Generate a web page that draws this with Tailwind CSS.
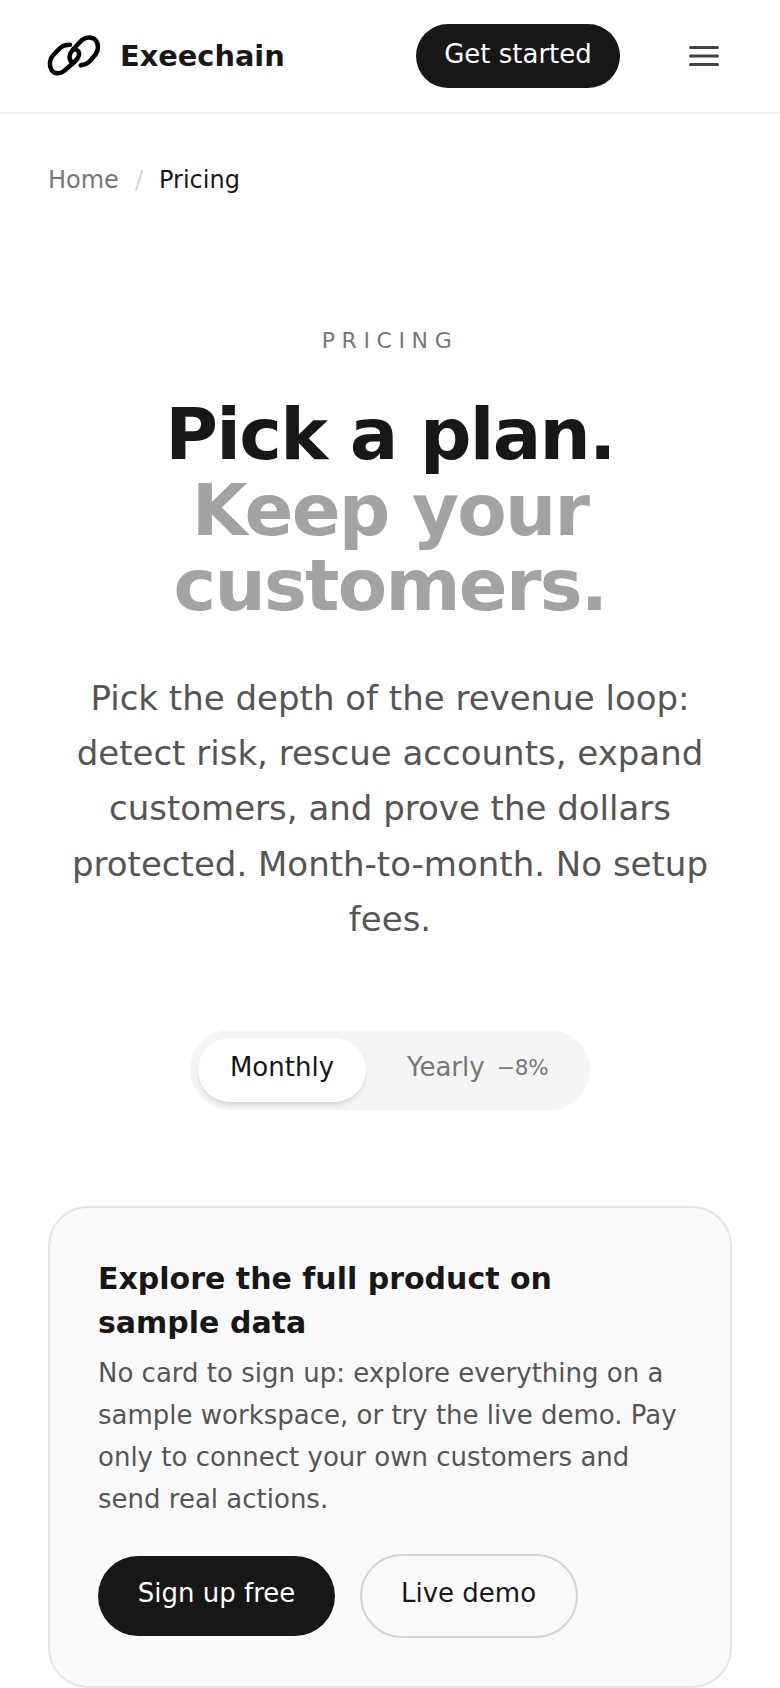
<!DOCTYPE html>
<html lang="en">
<head>
    <meta charset="UTF-8">
    <meta name="viewport" content="width=device-width, initial-scale=1.0">
    <title>Pricing</title>
    <script src="https://cdn.jsdelivr.net/npm/@tailwindcss/browser@4"></script>
</head>
<body class="bg-white text-[#171717] font-['DejaVu_Sans',sans-serif] h-[1688px] overflow-hidden">
    <!-- Navbar -->
    <header class="h-[114px] border-b-2 border-[#efefef] pl-[48px] pr-[61px] flex items-center justify-between">
        <a href="#" class="flex items-center gap-[20px]">
            <svg class="w-[52px] h-[40px] overflow-visible" viewBox="0 0 52 40" fill="none" stroke="#000" stroke-width="4.500" stroke-linecap="round">
                <path d="M22 8.700 C18 8.700 14.500 9.500 11.500 12.500 L4.500 20 C1.500 23.500 1 30 3.500 34 C6.500 38.500 12 38 16 35 L27 25.500 C31 21.500 32.500 17 29.500 14.500 C28.500 13.500 27.500 13.300 26.500 13.500"/>
                <path d="M32.700 29.300 C36 29 39 28 41.500 25.500 L47.500 18.500 C50.500 14.500 51 8 47.500 4 C44 0.500 38 1 34 4 L25 13.500 C21 18 20 23 24.500 27"/>
            </svg>
            <span class="pt-[2px] text-[28.800px] font-bold">Exeechain</span>
        </a>
        <div class="flex items-center gap-[69px]">
            <a href="#" class="w-[204px] h-[64px] rounded-full bg-[#171717] text-white text-[26px] flex items-center justify-center pb-[4px]">Get started</a>
            <svg class="w-[30px] h-[20px]" viewBox="0 0 30 20" fill="none" stroke="#444" stroke-width="3" stroke-linecap="round">
                <path d="M1.500 1.500h27M1.500 10h27M1.500 18.500h27"/>
            </svg>
        </div>
    </header>

    <!-- Breadcrumb -->
    <nav class="px-[48px] pt-[48px] flex items-center text-[24px] leading-[36px]">
        <a href="#" class="text-[#777777]">Home</a>
        <span class="mx-[16px] text-[#d4d4d4]">/</span>
        <span>Pricing</span>
    </nav>

    <!-- Hero -->
    <section class="px-[48px] text-center">
        <p class="mt-[127px] text-[22px] leading-[32px] tracking-[0.3em] text-[#777777]">PRICING</p>
        <h1 class="mt-[40px] text-[72px] leading-[75.600px] font-bold tracking-[-0.024em]">Pick a plan.<br><span class="text-[#a3a3a3]">Keep your customers.</span></h1>
        <p class="mt-[47.200px] text-[34px] leading-[55.250px] text-[#555555]">Pick the depth of the revenue loop: detect risk, rescue accounts, expand customers, and prove the dollars protected. Month-to-month. No setup fees.</p>
    </section>

    <!-- Billing toggle -->
    <div class="mt-[83px] flex justify-center">
        <div class="w-[400px] h-[80px] p-[8px] rounded-full bg-[#f5f5f5] flex items-center">
            <button class="w-[168px] h-[64px] rounded-full bg-white shadow-md text-[26px] pb-[6px]">Monthly</button>
            <span class="ml-[41px] pb-[6px] text-[26px] text-[#777777]">Yearly</span>
            <span class="ml-[12px] pb-[4px] text-[21.500px] text-[#777777]">−8%</span>
        </div>
    </div>

    <!-- Free tier card -->
    <section class="mx-[48px] mt-[96px] h-[482px] rounded-[40px] border-2 border-[#e5e5e5] bg-[#fafafa] px-[48px] pt-[49px]">
        <h2 class="text-[30px] leading-[44px] font-bold">Explore the full product on sample data</h2>
        <p class="mt-[7px] text-[26px] leading-[42px] text-[#555555]">No card to sign up: explore everything on a sample workspace, or try the live demo. Pay only to connect your own customers and send real actions.</p>
        <div class="mt-[34px] flex items-center gap-[25px]">
            <a href="#" class="w-[237px] h-[80px] rounded-full bg-[#171717] text-white text-[26px] flex items-center justify-center pb-[6px]">Sign up free</a>
            <a href="#" class="w-[218px] h-[84px] rounded-full border-2 border-[#d4d4d4] text-[26px] flex items-center justify-center pb-[6px] pr-[1px]">Live demo</a>
        </div>
    </section>
</body>
</html>
